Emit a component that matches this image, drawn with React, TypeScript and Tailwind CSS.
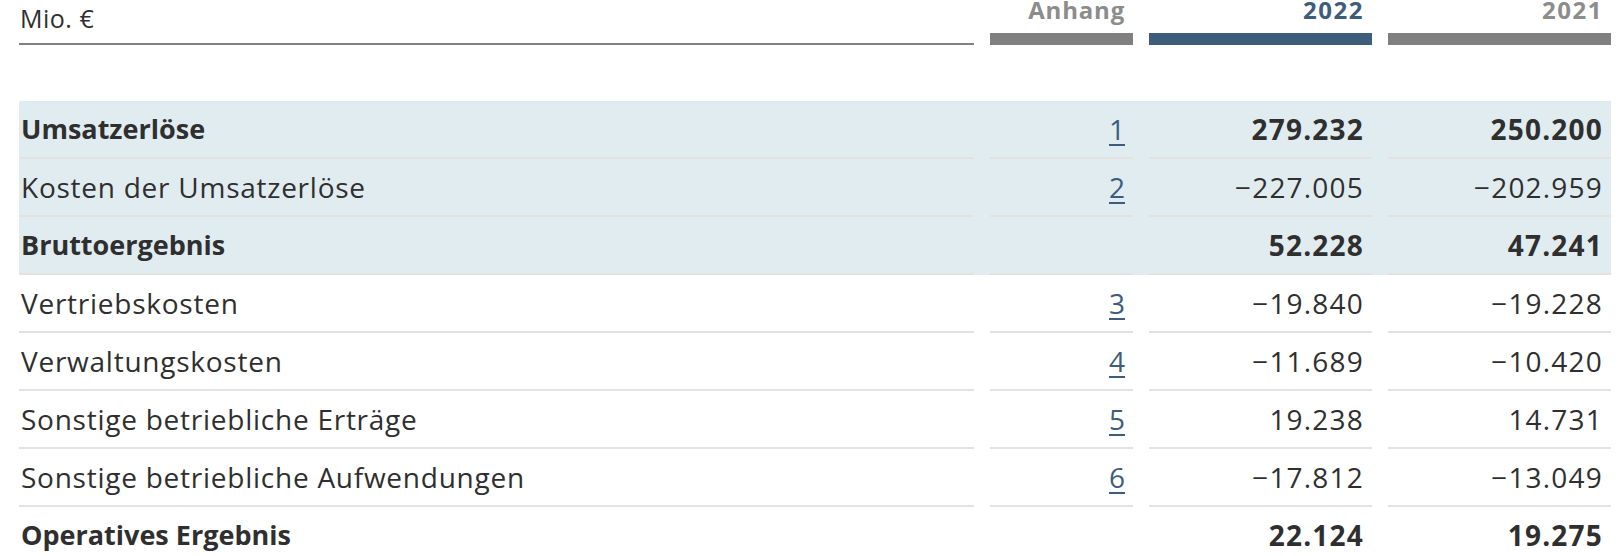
import React from "react";

type Row = {
  label: string;
  note?: string;
  v22: string;
  v21: string;
  bold?: boolean;
  shaded?: boolean;
};

const rows: Row[] = [
  { label: "Umsatzerlöse", note: "1", v22: "279.232", v21: "250.200", bold: true, shaded: true },
  { label: "Kosten der Umsatzerlöse", note: "2", v22: "−227.005", v21: "−202.959", shaded: true },
  { label: "Bruttoergebnis", v22: "52.228", v21: "47.241", bold: true, shaded: true },
  { label: "Vertriebskosten", note: "3", v22: "−19.840", v21: "−19.228" },
  { label: "Verwaltungskosten", note: "4", v22: "−11.689", v21: "−10.420" },
  { label: "Sonstige betriebliche Erträge", note: "5", v22: "19.238", v21: "14.731" },
  { label: "Sonstige betriebliche Aufwendungen", note: "6", v22: "−17.812", v21: "−13.049" },
  { label: "Operatives Ergebnis", v22: "22.124", v21: "19.275", bold: true },
];

function Num({ value, bold }: { value: string; bold?: boolean }) {
  return (
    <div
      className={
        "border-b-2 border-[#e4e2e0] text-right pr-2 tabular-nums text-[28px] tracking-[1.2px] whitespace-nowrap " +
        (bold ? "font-bold" : "font-normal")
      }
    >
      {value}
    </div>
  );
}

export default function App() {
  return (
    <div
      className="bg-white w-[1622px] h-[556px] overflow-hidden text-[#2f2f2f]"
      style={{ fontFamily: '"Open Sans", "Noto Sans", sans-serif' }}
    >
      <div className="ml-[19px] w-[1592px]">
        {/* header */}
        <div className="grid grid-cols-[955px_143px_223px_223px] gap-x-4 items-end h-[45px]">
          <div className="border-b-2 border-[#808080] pb-[13px] text-[25px] leading-[24px] tracking-[0.5px] pl-[1px]">
            Mio. €
          </div>
          <div className="flex flex-col">
            <div className="text-right pr-2 text-[24px] leading-[20px] font-bold text-[#8c8c8c] tracking-[0.8px]">
              Anhang
            </div>
            <div className="mt-[13px] h-3 bg-[#808080]" />
          </div>
          <div className="flex flex-col">
            <div className="text-right pr-2 text-[24px] leading-[20px] font-bold text-[#3d5d7a] tracking-[1.5px]">
              2022
            </div>
            <div className="mt-[13px] h-3 bg-[#3d5d7a]" />
          </div>
          <div className="flex flex-col">
            <div className="text-right pr-2 text-[24px] leading-[20px] font-bold text-[#8c8c8c] tracking-[1.5px]">
              2021
            </div>
            <div className="mt-[13px] h-3 bg-[#808080]" />
          </div>
        </div>

        {/* body */}
        <div className="mt-[56px]">
          {rows.map((r) => (
            <div
              key={r.label}
              className={
                "grid grid-cols-[955px_143px_223px_223px] gap-x-4 leading-[56px] " +
                (r.shaded ? "bg-[#e1ecf1]" : "bg-white")
              }
            >
              <div
                className={
                  "border-b-2 border-[#e4e2e0] pl-[2px] whitespace-nowrap " +
                  (r.bold ? "font-bold text-[27px]" : "font-normal text-[28px] tracking-[0.75px]")
                }
              >
                {r.label}
              </div>
              <div className="border-b-2 border-[#e4e2e0] text-right pr-2 text-[28px]">
                {r.note ? (
                  <span className="text-[#3d5d7a] underline decoration-2 underline-offset-[4px]">
                    {r.note}
                  </span>
                ) : null}
              </div>
              <Num value={r.v22} bold={r.bold} />
              <Num value={r.v21} bold={r.bold} />
            </div>
          ))}
        </div>
      </div>
    </div>
  );
}
